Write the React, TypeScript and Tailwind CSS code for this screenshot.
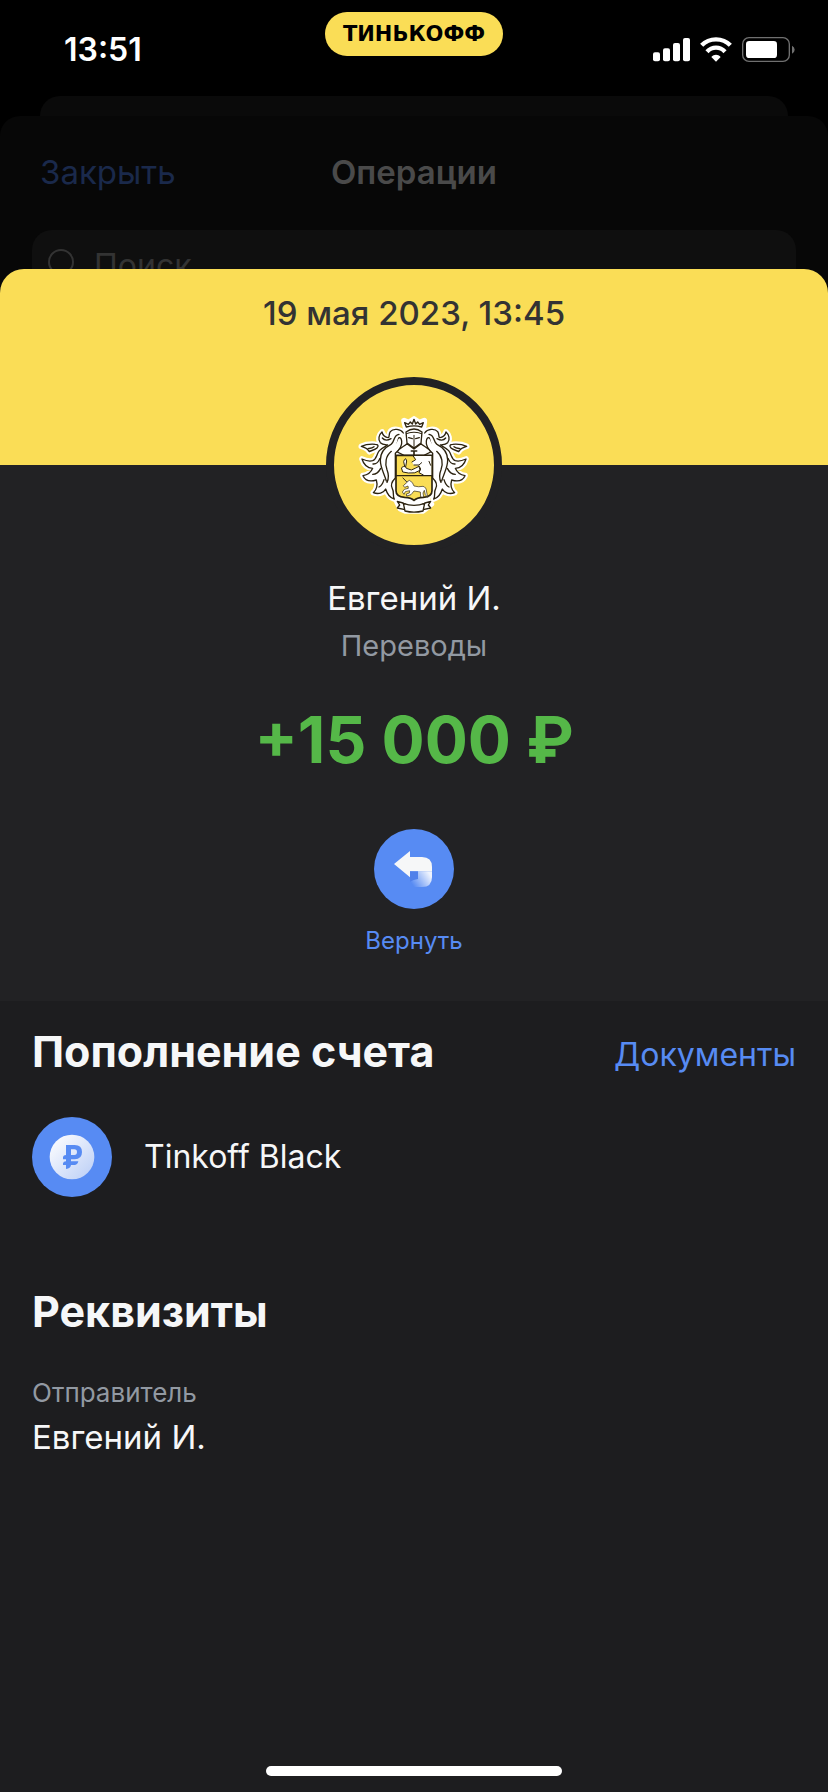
import type { ReactNode } from "react";

const YELLOW = "#fadd56";
const INK = "#2c2310";

export default function App() {
  return (
    <div className="flex min-h-screen flex-col bg-black font-['Inter',sans-serif] text-[#f6f7f8]">
      <StatusBar />

      {/* Edge of the sheet further down the stack */}
      <div className="mx-10 h-5 rounded-t-[20px] bg-[#0a0a0a]" />

      <div className="flex flex-1 flex-col rounded-t-[20px] bg-[#070707]">
        <OperationsHeader />

        {/* Operation details */}
        <main className="relative -mt-[33px] flex flex-1 flex-col overflow-hidden rounded-t-[24px] bg-[#1d1d1f]">
          <header className="h-[196px] bg-[#fadd56] pt-6 text-center text-[33px] leading-10 font-medium text-[#333333]">
            <time dateTime="2023-05-19T13:45">19 мая 2023, 13:45</time>
          </header>

          <section className="flex flex-col items-center bg-[#222224] pb-11">
            <div className="-mt-[88px] rounded-full border-8 border-[#222224] bg-[#fadd56]">
              <Crest />
            </div>
            <h1 className="mt-[25px] text-[33px] leading-10">Евгений И.</h1>
            <p className="mt-2.5 text-[29px] leading-9 text-[#9299a2]">Переводы</p>
            <p className="mt-9 text-[64px] leading-[80px] font-bold text-[#55b848]">+15 000 ₽</p>
            <button className="mt-[49px] flex flex-col items-center gap-4 text-2xl leading-8 text-[#578bf3]">
              <ReturnIcon />
              Вернуть
            </button>
          </section>

          <section className="px-8 pt-[22px]">
            <div className="flex items-center justify-between">
              <SectionTitle>Пополнение счета</SectionTitle>
              <a href="#documents" className="pt-2 text-[32px] leading-10 text-[#578bf3]">
                Документы
              </a>
            </div>
            <div className="mt-[38px] flex items-center gap-8">
              <AccountIcon />
              <span className="text-[32px] leading-10">Tinkoff Black</span>
            </div>
          </section>

          <section className="px-8 pt-[86px]">
            <SectionTitle>Реквизиты</SectionTitle>
            <dl className="mt-[38px]">
              <dt className="text-[26px] leading-8 text-[#9299a2]">Отправитель</dt>
              <dd className="mt-2 text-[33px] leading-10">Евгений И.</dd>
            </dl>
          </section>

          {/* Home indicator */}
          <div className="mx-auto mt-auto mb-4 h-2.5 w-[296px] rounded-full bg-white" />
        </main>
      </div>
    </div>
  );
}

function SectionTitle({ children }: { children: ReactNode }) {
  return <h2 className="text-[43px] leading-[56px] font-bold">{children}</h2>;
}

function StatusBar() {
  return (
    <div className="grid h-24 grid-cols-3 items-start">
      <div className="pt-[30px] pl-16 text-[32px] leading-10 font-semibold text-white">13:51</div>
      <div className="mt-3 flex h-11 w-[178px] items-center justify-center justify-self-center rounded-full bg-[#fadd56] font-['DejaVu_Sans',sans-serif] text-[21px] leading-6 font-bold text-black">
        ТИНЬКОФФ
      </div>
      <div className="flex items-center gap-2.5 justify-self-end pt-[37px] pr-[33px]">
        <svg viewBox="0 0 111 75" className="h-[25px] w-[37px]" fill="#fff">
          <rect x="0" y="46" width="21" height="27" rx="6" />
          <rect x="30" y="34" width="21" height="39" rx="6" />
          <rect x="60" y="18" width="21" height="55" rx="6" />
          <rect x="90" y="3" width="21" height="70" rx="6" />
        </svg>
        <svg viewBox="0 0 96 75" className="h-[25px] w-8" fill="none" stroke="#fff" strokeWidth="13">
          <path d="M5 25 C28 1 68 1 91 25" />
          <path d="M21 44 C36 28 60 28 75 44" />
          <path d="M34 60 C42 51 54 51 62 60 L48 74 Z" fill="#fff" stroke="none" />
        </svg>
        <svg viewBox="0 0 159 75" className="h-[25px] w-[53px]">
          <rect x="2" y="2" width="140" height="71" rx="19" fill="none" stroke="#707070" strokeWidth="4" />
          <rect x="12" y="12" width="93" height="51" rx="10" fill="#fff" />
          <path d="M150 26 Q158 30 158 38 Q158 46 150 50 Z" fill="#707070" />
        </svg>
      </div>
    </div>
  );
}

function OperationsHeader() {
  return (
    <div>
      <div className="mb-0.5 grid h-28 grid-cols-3 items-center px-10 text-[33px] leading-10">
        <button className="justify-self-start text-[#1a294b]">Закрыть</button>
        <div className="justify-self-center font-semibold text-[#4a4a4a]">Операции</div>
      </div>
      <label className="mx-8 flex h-[72px] items-center gap-[18px] rounded-[20px] bg-[#0f0f0f] pl-4">
        <svg viewBox="0 0 28 36" className="h-9 w-7" fill="none" stroke="#333" strokeWidth="2">
          <circle cx="13" cy="14" r="12" />
          <path d="M21 23 L27 30" />
        </svg>
        <input
          type="search"
          aria-label="Поиск"
          placeholder="Поиск"
          className="min-w-0 flex-1 bg-transparent text-[32px] leading-10 placeholder:text-[#333333]"
        />
      </label>
    </div>
  );
}

function ReturnIcon() {
  return (
    <svg viewBox="0 0 240 240" className="size-20">
      <defs>
        <linearGradient id="tail" gradientUnits="userSpaceOnUse" x1="166" y1="134" x2="116" y2="168">
          <stop offset="0" stopColor="#fff" stopOpacity="0.9" />
          <stop offset="1" stopColor="#fff" stopOpacity="0" />
        </linearGradient>
      </defs>
      <circle cx="120" cy="120" r="120" fill="#578bf3" />
      <path d="M132 127 H174 V144 Q174 174 144 174 H108 V127 H132 Z" fill="url(#tail)" />
      <path d="M60 105 L108 66 V84 H144 Q174 84 174 114 V127 H108 V145 Z" fill="#f6f7f8" />
      <path d="M108 127 H132 V150 Q118 152 108 158 Z" fill="#5080ea" />
    </svg>
  );
}

function AccountIcon() {
  return (
    <svg viewBox="0 0 240 240" className="size-20">
      <defs>
        <linearGradient id="coin" x1="0" y1="0" x2="1" y2="1">
          <stop offset="0.1" stopColor="#fafbfe" />
          <stop offset="1" stopColor="#b9cdf6" />
        </linearGradient>
      </defs>
      <circle cx="120" cy="120" r="120" fill="#578bf3" />
      <circle cx="120" cy="120" r="67" fill="url(#coin)" />
      <path
        fill="#578bf3"
        fillRule="evenodd"
        d="M102 84 H128 Q150 84 150 105 Q150 127 128 127 H117 V133 H139 Q137 143 129 144 H117 Q116 154 102 156 V144 H93 V139 Q94 133 102 133 V127 H93 V120 Q94 114 102 114 Z M117 97 V114 H127 Q135 114 135 105 Q135 97 127 97 Z"
      />
    </svg>
  );
}

// Left half of the leaves around the shield; the right half is its mirror
function Mantle() {
  return (
    <>
      <path d="M268 201 C260 189 238 186 229 197 C223 205 228 216 221 215 C212 213 206 206 204 198 C195 206 191 220 199 230 C205 236 214 236 221 237 C211 243 202 247 196 254 C187 265 188 280 176 284 C166 287 155 284 144 279 C149 296 159 306 176 307 C171 319 161 327 147 329 C153 343 167 348 187 342 C191 356 188 371 178 380 C193 386 209 381 215 369 C219 382 224 395 241 399 C235 388 241 378 235 368 C228 356 235 345 244 336 V262 C256 252 265 239 263 225 C261 211 252 213 249 224 C246 234 238 240 226 241" />
      <path d="M184 235 C192 235 195 240 189 246 C182 253 173 252 166 257 C163 251 156 245 142 241 C157 234 171 234 184 235 Z" />
      <path d="M180 242 C174 247 168 247 162 248" />
      <path d="M255 205 C237 207 244 226 231 235 C211 245 199 262 199 282 C199 305 209 318 217 345" />
      <path d="M232 256 C215 270 212 292 219 311 C225 326 225 337 219 349" />
      <path d="M177 294 C190 295 194 287 198 277 M176 325 C189 325 195 317 200 307 M195 363 C204 359 207 351 210 341 M205 216 C211 224 222 223 231 218" />
    </>
  );
}

function Crest() {
  return (
    <svg viewBox="60 57 480 480" className="size-40" strokeLinecap="round" strokeLinejoin="round">
      {/* White edge around the whole emblem */}
      <g fill="#fff" stroke="#fff" strokeWidth="17">
        <Mantle />
        <g transform="translate(600 0) scale(-1 1)">
          <Mantle />
        </g>
        <path d="M270 164 L284 170 L300 159 L316 170 L331 164 L326 210 L320 240 L353 267 V385 L334 398 L352 414 L342 423 L326 435 H274 L259 428 L249 408 L265 397 L246 385 V267 L276 240 L276 190 Z" />
      </g>
      <g fill="#fff" stroke={INK} strokeWidth="4">
        <Mantle />
        <g transform="translate(600 0) scale(-1 1)">
          <Mantle />
        </g>

        {/* Ribbon */}
        <path d="M267 411 L250 406 L257 417 L250 426 L273 431 L273 413 M333 411 L350 406 L343 417 L350 426 L327 431 L327 413" />
        <path d="M268 412 Q300 424 332 412 L327 435 Q300 442 273 435 Z" />

        {/* Crown and helmet */}
        <path d="M277 183 L272 170 L283 175 L289 168 L295 174 L300 160 L305 174 L311 168 L317 175 L328 170 L323 183 Q300 176 277 183 Z" />
        <path d="M276 198 Q300 180 324 198 L321 231 L300 246 L279 231 Z" />
        <path d="M277 203 Q300 194 323 203 M300 208 V244" fill="none" strokeWidth="3" />
        <path d="M284 215 L295 218 M316 215 L305 218" fill="none" />
        <path d="M279 233 C271 242 257 244 250 258 L270 268 H330 L350 258 C343 244 329 242 321 233 L300 249 Z" />
        <path d="M292 255 H308 M300 255 V269" strokeWidth="5" />

        {/* Shield */}
        <path
          d="M246 268 H354 V374 Q354 392 328 394 Q308 395 300 403 Q292 395 272 394 Q246 392 246 374 Z"
          fill={YELLOW}
          strokeWidth="5"
        />
      </g>
      <path d="M300 270 L306 281 L294 288 L299 297 L315 299 L320 306 L316 319 L324 327 H352 V270 Z" fill="#fff" />
      <path
        d="M298 271 L305 281 L294 288 M300 297 L315 297 L323 290 M315 300 L320 309 L315 320 L328 327 M345 286 L350 298"
        fill="none"
        stroke={INK}
        strokeWidth="3"
      />
      <path
        d="M263 305 C267 299 277 301 277 307 L292 312 Q304 307 315 301 L318 313 Q303 324 283 321 L267 318 Z"
        fill="#fff"
        stroke={INK}
        strokeWidth="3"
      />
      <path d="M272 301 L269 287 Q270 280 275 278 L278 285 L275 302 Z" fill="#fff" stroke={INK} strokeWidth="3" />
      <path d="M248 329 H352" stroke={INK} strokeWidth="4" />
      {/* Unicorn */}
      <path
        d="M267 336 L279 348 L286 343 Q297 348 300 360 Q314 364 327 361 Q337 363 338 378 L341 394 L334 386 L331 373 L327 381 L329 393 H320 L319 378 L300 375 L291 386 L278 390 L277 384 L286 381 L287 374 L274 377 L270 385 L265 378 L271 370 L283 367 L282 360 L272 364 L268 359 L278 350 Z"
        fill="#fff"
        stroke={INK}
        strokeWidth="2"
      />
    </svg>
  );
}
